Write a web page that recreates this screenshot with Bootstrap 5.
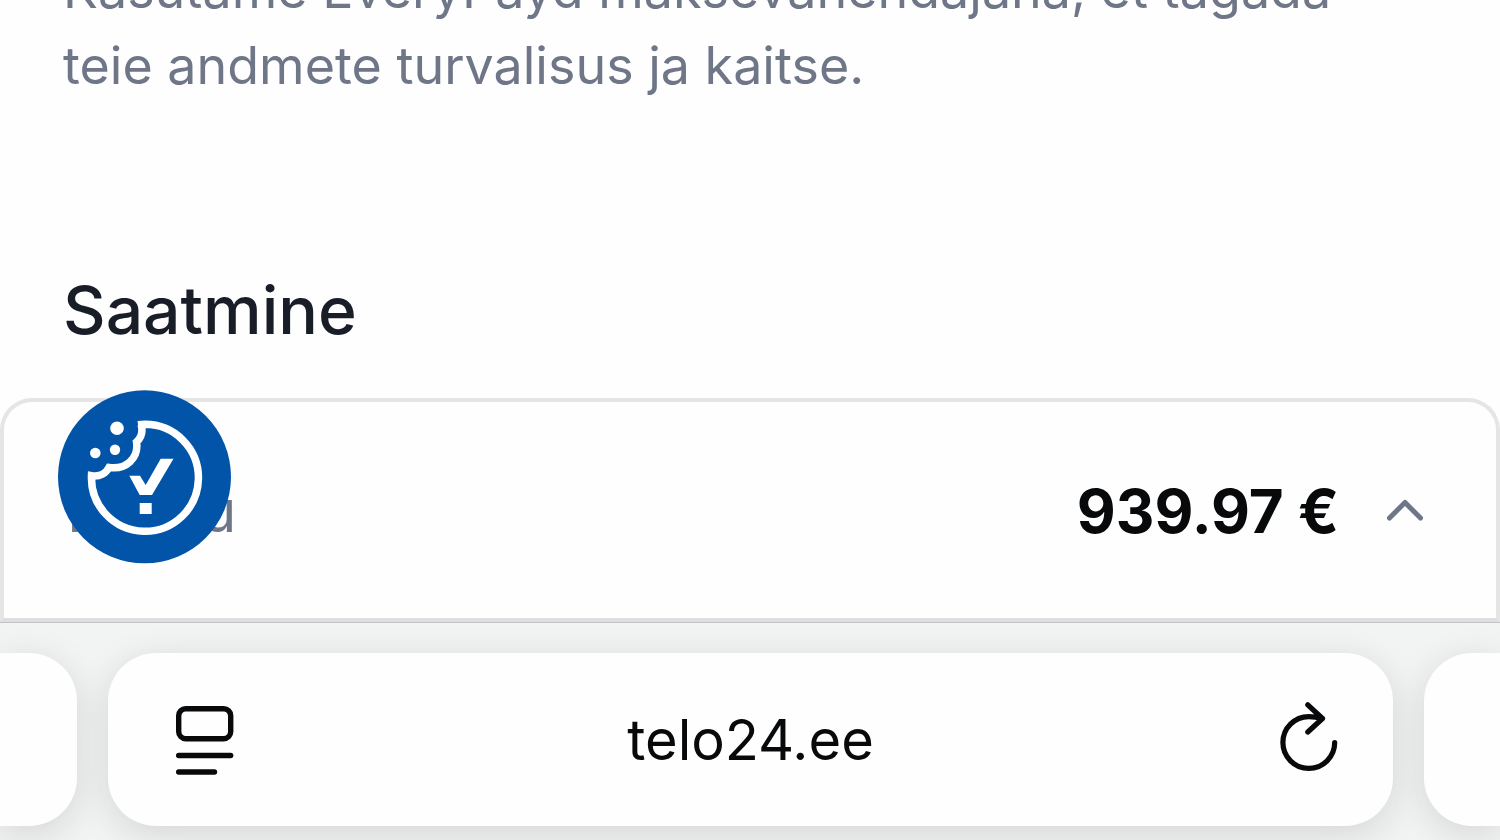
<!DOCTYPE html>
<html lang="et">
<head>
<meta charset="utf-8">
<meta name="viewport" content="width=device-width, initial-scale=1">
<title>telo24.ee</title>
<link href="https://cdn.jsdelivr.net/npm/bootstrap@5.3.0/dist/css/bootstrap.min.css" rel="stylesheet">
<style>
  body { font-family: Inter, "Liberation Sans", sans-serif; background: #fefefe; }
  .page-body { min-height: 0; padding: 0 63px 48px; }
  .intro { font-size: 52px; line-height: 76px; color: #6e7687; margin-bottom: 166px; }
  .section-title { font-size: 66px; line-height: 80px; font-weight: 500; color: #181d27; }
  .sheet { border: 4px solid #e5e5e5; border-radius: 32px 32px 0 0; border-bottom-color: #dedede; background: #fefefe; }
  .summary { height: 216px; padding: 2px 73px 0 63px; color: #08090b; }
  .summary-label { font-size: 58px; line-height: 72px; color: #6e7687; }
  .summary-price { font-size: 60px; line-height: 72px; font-weight: 700; }
  .cookie-btn { left: 54px; top: -12px; width: 174px; height: 174px; }
  .browser-bar { background: #f2f4f4; border-top: 1px solid #c2c4ca; padding: 30px 0 14px; gap: 31px; }
  .tab-card { height: 173px; background: #fefefe; border-radius: 48px; box-shadow: 0 8px 36px rgba(20, 10, 10, .13); }
  .tab-prev { width: 77px; border-top-left-radius: 0; border-bottom-left-radius: 0; }
  .tab-next { width: 76px; border-top-right-radius: 0; border-bottom-right-radius: 0; }
  .address { padding: 0 52px; }
  .host { font-size: 56px; line-height: 72px; color: #08090b; }
</style>
</head>
<body>
<div class="vh-100 d-flex flex-column overflow-hidden">
  <main class="page-body flex-grow-1 d-flex flex-column justify-content-end overflow-hidden">
    <p class="intro">Kasutame EveryPayd maksevahendajana, et tagada<br>teie andmete turvalisus ja kaitse.</p>
    <h2 class="section-title mb-0">Saatmine</h2>
  </main>

  <section class="sheet position-relative flex-shrink-0">
    <button type="button" class="summary btn border-0 w-100 d-flex align-items-center" aria-expanded="false">
      <span class="summary-label me-auto">Kokku</span>
      <span class="summary-price">939.97 €</span>
      <svg class="ms-5" width="36" height="24" viewBox="0 0 36 24" fill="none" stroke="#6e7687" stroke-width="5" stroke-linecap="round" stroke-linejoin="round" aria-hidden="true"><path d="M2.500 19 18 3.500 33.500 19"/></svg>
    </button>
    <button type="button" class="cookie-btn btn p-0 border-0 rounded-circle position-absolute d-flex" aria-label="Küpsiste seaded">
      <svg width="174" height="174" viewBox="0 0 174 174" fill="none" aria-hidden="true">
        <circle cx="86.500" cy="86.800" r="86.500" fill="#0254a8"/>
        <path d="M80 34.700Q83.500 34.300 87 34.300A53.500 53.500 0 1 1 33.500 85.600C42 87 48 83 51 77.500C68 80 81 68 78.500 52C84 47 85 41 83 34.500" stroke="#fff" stroke-width="7.500"/>
        <g fill="#fff"><circle cx="59" cy="38.300" r="6.800"/><circle cx="57" cy="59.700" r="5.200"/><circle cx="37.300" cy="63" r="5.300"/>
        <path d="M102.700 68.700H115.500L94 105H81.700L71.300 85.700H82L87.700 95ZM81.700 113H93.700V124H81.700Z"/></g>
      </svg>
    </button>
  </section>

  <nav class="browser-bar d-flex flex-shrink-0" aria-label="Brauseri riba">
    <div class="tab-card tab-prev flex-shrink-0"></div>
    <div class="tab-card address flex-grow-1 d-flex align-items-center justify-content-between">
      <button type="button" class="btn p-0 border-0 d-flex" aria-label="Lehe menüü">
        <svg width="78" height="76" viewBox="-12 0 78 76" fill="none" stroke="#08090b" stroke-width="5.400" stroke-linecap="round" aria-hidden="true"><rect x="6.700" y="6.700" width="52" height="30" rx="7"/><path d="M6.700 53.500H58.700M6.700 70H42.500"/></svg>
      </button>
      <a href="#" class="host text-decoration-none">telo24.ee</a>
      <button type="button" class="btn p-0 border-0 d-flex" aria-label="Laadi uuesti">
        <svg width="78" height="76" viewBox="-12 0 78 76" fill="none" stroke="#08090b" stroke-width="5.200" stroke-linecap="round" stroke-linejoin="round" aria-hidden="true"><path d="M59.700 40.500A25.900 25.900 0 1 1 33.800 14.600Q40 14.600 47.500 16.500M32.800 2.800 47.500 16.500 32.800 30"/></svg>
      </button>
    </div>
    <div class="tab-card tab-next flex-shrink-0"></div>
  </nav>
</div>
<script src="https://cdn.jsdelivr.net/npm/bootstrap@5.3.0/dist/js/bootstrap.bundle.min.js"></script>
</body>
</html>
